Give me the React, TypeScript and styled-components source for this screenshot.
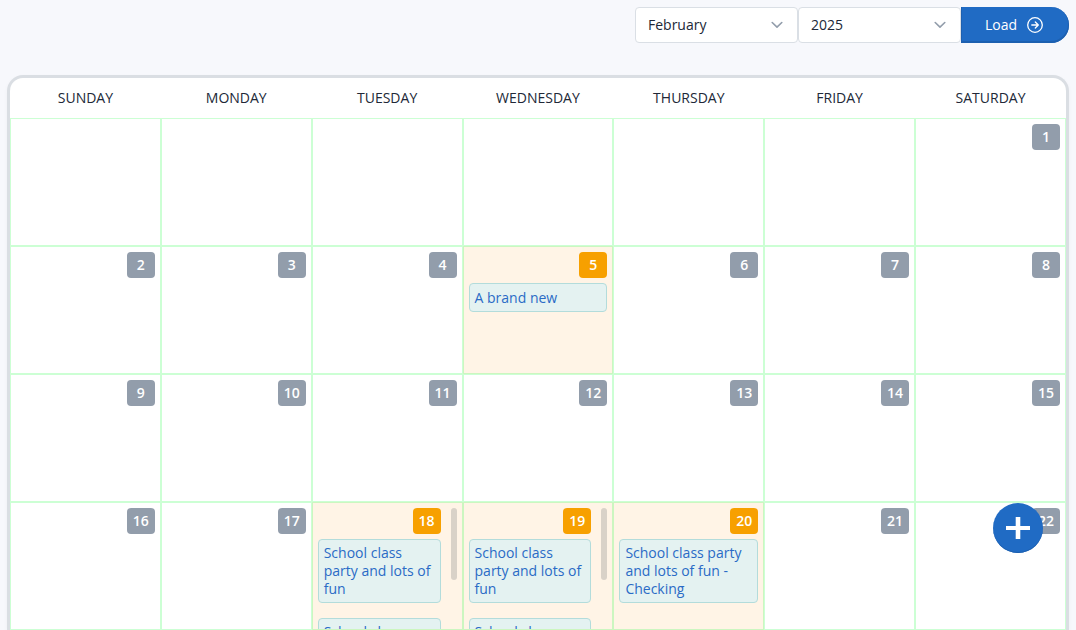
import React from "react";
import styled, { createGlobalStyle } from "styled-components";

const GlobalStyle = createGlobalStyle`
  *, *::before, *::after { box-sizing: border-box; }
  body {
    margin: 0;
    background: #f7f8fc;
    color: #212837;
    font-family: "Open Sans", "Noto Sans", sans-serif;
    font-size: 14px;
  }
  button, select { font: inherit; }
`;

const Page = styled.main`
  height: 100vh;
  overflow: hidden;
  padding: 7px 7px 0;
`;

const Toolbar = styled.form`
  display: flex;
  justify-content: flex-end;
  margin-bottom: 32px;
`;

const SelectWrap = styled.div`
  display: grid;
  align-items: center;
  width: 163px;
  & > * { grid-area: 1 / 1; }
  & > svg {
    justify-self: end;
    margin-right: 15px;
    pointer-events: none;
  }
`;

const Select = styled.select`
  appearance: none;
  width: 100%;
  height: 36px;
  padding: 0 36px 2px 12px;
  border: 1px solid #dadfe5;
  border-radius: 4px;
  background: #fff;
  color: #212837;
`;

const LoadButton = styled.button`
  display: flex;
  align-items: center;
  justify-content: center;
  gap: 10px;
  width: 108px;
  height: 36px;
  padding: 0 2px 0 0;
  border: 0;
  border-radius: 0 18px 18px 0;
  background: #206bc4;
  box-shadow: inset 0 -1px 0 1px #1d60b0;
  color: #fff;
  font-weight: 500;
  & > span { padding-bottom: 2px; }
`;

const Card = styled.section`
  overflow: hidden;
  border: 3px solid #dadee3;
  border-bottom: 0;
  border-radius: 16px 16px 0 0;
  background: #fff;
  box-shadow: 0 2px 4px rgba(30, 41, 59, 0.04);
`;

const Calendar = styled.table`
  width: 100%;
  table-layout: fixed;
  border-spacing: 0;
`;

const DayName = styled.th`
  height: 40px;
  padding: 0 0 2px;
  font-weight: 400;
  text-transform: uppercase;
`;

const Cell = styled.td<{ $busy: boolean }>`
  height: 128px;
  padding: 0;
  border: 1px solid rgba(0, 255, 42, 0.2);
  background: ${(p) => (p.$busy ? "#fff4e6" : "#fff")};
  vertical-align: top;
`;

const CellBody = styled.div`
  display: flex;
  gap: 10px;
  height: 126px;
  overflow: hidden;
  padding: 5px 5px 0;
`;

const Entries = styled.div`
  display: flex;
  flex: 1;
  flex-direction: column;
  min-width: 0;
`;

const DayBadge = styled.span<{ $busy: boolean }>`
  align-self: flex-end;
  flex: none;
  min-width: 28px;
  margin-bottom: 5px;
  padding: 0 6px;
  border-radius: 4px;
  background: ${(p) => (p.$busy ? "#f7a000" : "#929dab")};
  color: #fff;
  font-weight: 600;
  line-height: 26px;
  text-align: center;
`;

const EventLink = styled.a`
  display: block;
  flex: none;
  align-content: center;
  min-height: 29px;
  margin-bottom: 15px;
  padding: 4px 5px;
  border: 1px solid #b3dcdb;
  border-radius: 4px;
  background: #e4f2f1;
  color: #2a6bc6;
  line-height: 18px;
  text-decoration: none;
`;

const ScrollThumb = styled.div`
  flex: none;
  width: 6px;
  height: 72px;
  border-radius: 3px;
  background: #d9d2c8;
`;

const AddButton = styled.button`
  position: fixed;
  right: 33px;
  bottom: 77px;
  display: grid;
  place-items: center;
  width: 50px;
  height: 50px;
  padding: 0;
  border: 0;
  border-radius: 50%;
  background: #206bc4;
  box-shadow: inset 0 -1px 0 #1d60b0;
  color: #fff;
`;

const DAYS = ["Sunday", "Monday", "Tuesday", "Wednesday", "Thursday", "Friday", "Saturday"];
const MONTHS = ["January", "February", "March", "April", "May", "June", "July", "August", "September", "October", "November", "December"];
const WEEKS = [0, 1, 2, 3].map((w) => DAYS.map((_, d) => w * 7 + d - 5));
const PARTY = "School class party and lots of fun";
const EVENTS: Record<number, string[]> = {
  5: ["A brand new"],
  18: [PARTY, PARTY],
  19: [PARTY, PARTY],
  20: [PARTY + " - Checking"],
};

const Chevron = () => (
  <svg width="12" height="8" viewBox="0 0 12 8" fill="none" stroke="#929dab" strokeWidth="1.6" strokeLinecap="round" strokeLinejoin="round" aria-hidden="true">
    <path d="M1.2 1.5l4.8 4.6 4.8-4.6" />
  </svg>
);

const ArrowCircle = () => (
  <svg width="16" height="16" viewBox="0 0 16 16" fill="none" stroke="currentColor" strokeWidth="1.3" strokeLinecap="round" strokeLinejoin="round" aria-hidden="true">
    <circle cx="8" cy="8" r="7.3" />
    <path d="M4.8 8h6.4M8.3 5L11.3 8l-3 3" />
  </svg>
);

function Day({ day }: { day: number }) {
  const events = EVENTS[day] ?? [];
  const busy = events.length > 0;
  return (
    <Cell $busy={busy}>
      {day > 0 && (
        <CellBody>
          <Entries>
            <DayBadge $busy={busy}>{day}</DayBadge>
            {events.map((title, i) => (
              <EventLink href="#" key={i}>{title}</EventLink>
            ))}
          </Entries>
          {events.length > 1 && <ScrollThumb />}
        </CellBody>
      )}
    </Cell>
  );
}

export default function App() {
  return (
    <Page>
      <GlobalStyle />
      <Toolbar onSubmit={(e) => e.preventDefault()}>
        <SelectWrap>
          <Select aria-label="Month" defaultValue="February">
            {MONTHS.map((m) => <option key={m}>{m}</option>)}
          </Select>
          <Chevron />
        </SelectWrap>
        <SelectWrap>
          <Select aria-label="Year" defaultValue="2025">
            {["2024", "2025", "2026"].map((y) => <option key={y}>{y}</option>)}
          </Select>
          <Chevron />
        </SelectWrap>
        <LoadButton type="submit"><span>Load</span><ArrowCircle /></LoadButton>
      </Toolbar>
      <Card>
        <Calendar>
          <thead>
            <tr>{DAYS.map((d) => <DayName scope="col" key={d}>{d}</DayName>)}</tr>
          </thead>
          <tbody>
            {WEEKS.map((week) => (
              <tr key={week[0]}>{week.map((day) => <Day day={day} key={day} />)}</tr>
            ))}
          </tbody>
        </Calendar>
      </Card>
      <AddButton type="button" aria-label="Add event">
        <svg width="24" height="24" viewBox="0 0 24 24" fill="none" stroke="currentColor" aria-hidden="true">
          <path d="M12 1v22" strokeWidth="4.6" />
          <path d="M0 12h24" strokeWidth="4" />
        </svg>
      </AddButton>
    </Page>
  );
}
